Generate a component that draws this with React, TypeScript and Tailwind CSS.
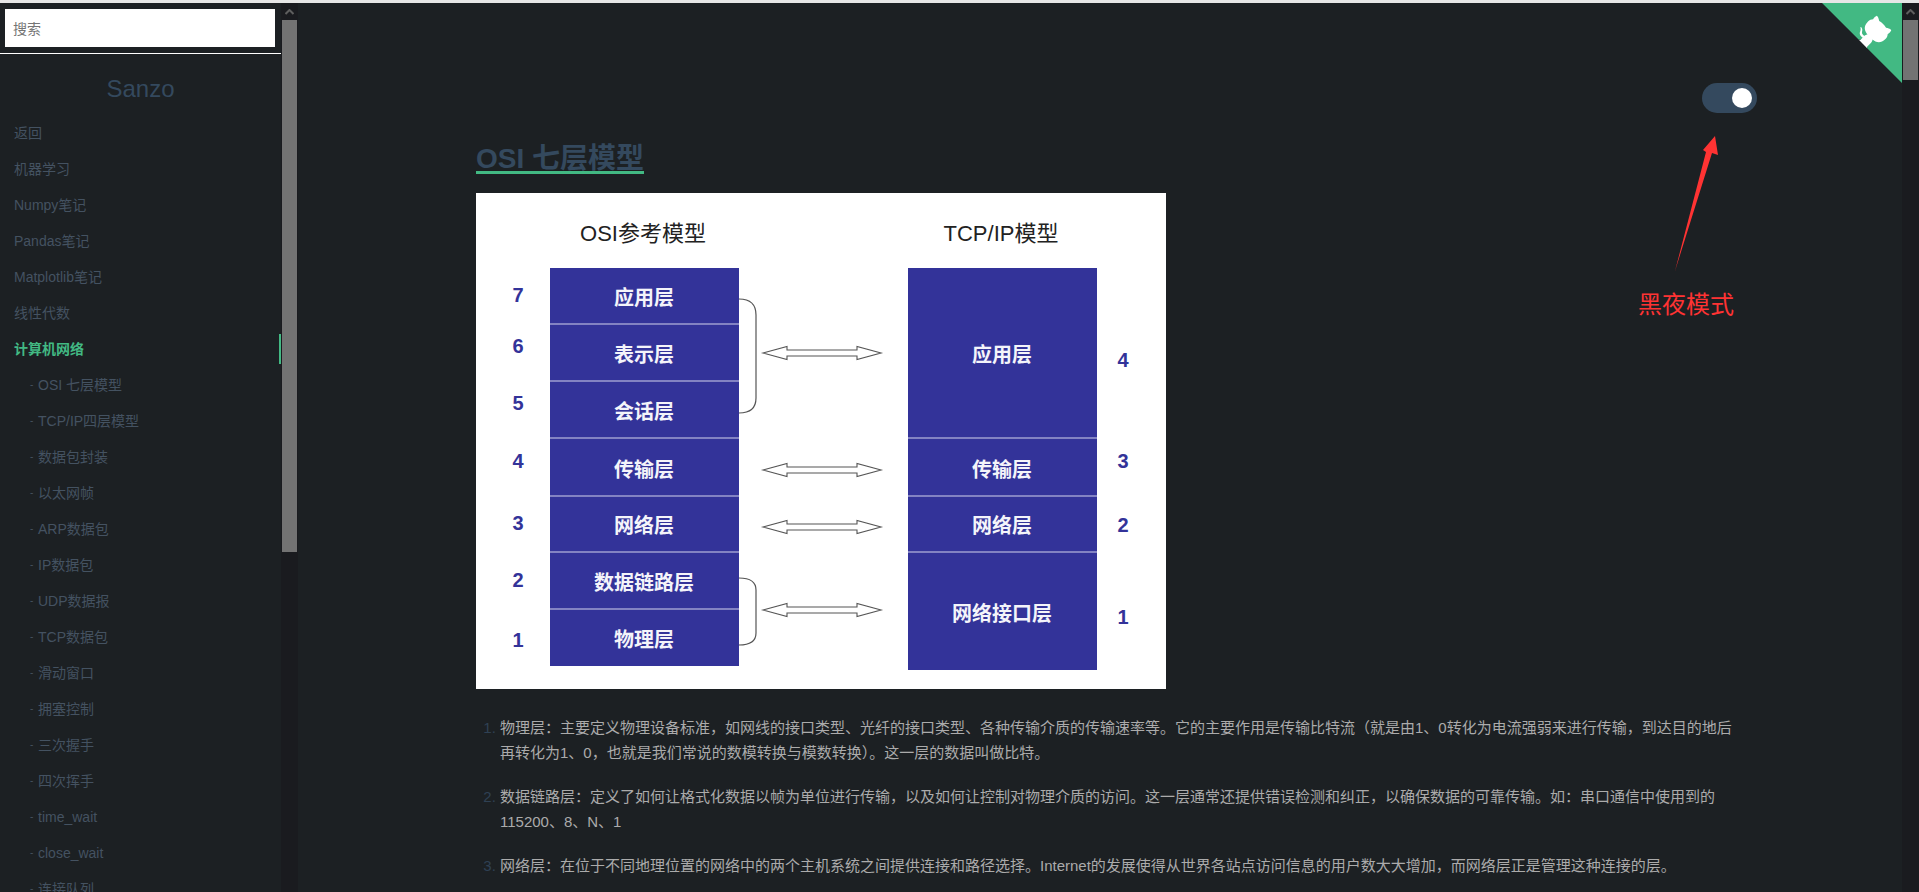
const topNav = ["返回", "机器学习", "Numpy笔记", "Pandas笔记", "Matplotlib笔记", "线性代数"]
const subNav = [
  "OSI 七层模型", "TCP/IP四层模型", "数据包封装", "以太网帧", "ARP数据包", "IP数据包", "UDP数据报", "TCP数据包",
  "滑动窗口", "拥塞控制", "三次握手", "四次挥手", "time_wait", "close_wait", "连接队列",
]

const osiRows = [
  { label: "应用层", y: 105 }, { label: "表示层", y: 162 }, { label: "会话层", y: 219 }, { label: "传输层", y: 277 },
  { label: "网络层", y: 333 }, { label: "数据链路层", y: 390 }, { label: "物理层", y: 447 },
]
const tcpRows = [
  { label: "应用层", y: 162 }, { label: "传输层", y: 277 }, { label: "网络层", y: 333 }, { label: "网络接口层", y: 421 },
]
const osiNums = [
  { n: 7, y: 102 }, { n: 6, y: 153 }, { n: 5, y: 210 }, { n: 4, y: 268 }, { n: 3, y: 330 }, { n: 2, y: 387 }, { n: 1, y: 447 },
]
const tcpNums = [{ n: 4, y: 167 }, { n: 3, y: 268 }, { n: 2, y: 332 }, { n: 1, y: 424 }]
const arrowYs = [160, 277, 334, 417]

function Scrollbar({ thumbHeight }: { thumbHeight: number }) {
  return (
    <div className="w-[17px] shrink-0 bg-[#1a1b1f] flex flex-col items-center">
      <div className="h-[17px] w-full flex items-center justify-center">
        <svg width="9" height="6" viewBox="0 0 9 6"><path d="M0.5 5 L4.5 1 L8.5 5" fill="none" stroke="#5e5e5e" strokeWidth="2" /></svg>
      </div>
      <div className="w-[15px] bg-[#737373]" style={{ height: thumbHeight }} />
    </div>
  )
}

function Sidebar() {
  return (
    <aside className="w-[298px] shrink-0 flex overflow-hidden">
      <div className="w-[281px] shrink-0">
        <div className="px-[5px] pt-[6px] pb-[6px] border-b border-white">
          <input placeholder="搜索" className="w-[270px] h-[38px] bg-white px-[8px] pt-[2px] text-[14px] outline-none placeholder:text-[#757575]" />
        </div>
        <h1 className="mt-[14px] mb-[5px] h-[42px] leading-[42px] text-center text-[24px] text-[#34495e]">Sanzo</h1>
        <ul className="text-[14px] text-[#445261]">
          {topNav.map(item => (
            <li key={item} className="h-9 leading-9 pl-[14px]">{item}</li>
          ))}
          <li className="h-[30px] my-[3px] leading-[30px] pl-[14px] font-bold text-[#42b983] border-r-2 border-[#42b983]">计算机网络</li>
          {subNav.map(item => (
            <li key={item} className="h-9 leading-9 pl-[30px] flex">
              <span className="w-2 text-[10px] text-[#46525e]">-</span>
              <span>{item}</span>
            </li>
          ))}
        </ul>
      </div>
      <Scrollbar thumbHeight={532} />
    </aside>
  )
}

function Diagram() {
  const sans = '"Liberation Sans","Noto Sans CJK SC",sans-serif'
  return (
    <svg width="690" height="496" viewBox="0 0 690 496" className="block bg-white">
      <text x="167" y="48" fontSize="22" fontFamily={sans} textAnchor="middle" fill="#222">OSI参考模型</text>
      <text x="525" y="48" fontSize="22" fontFamily={sans} textAnchor="middle" fill="#222">TCP/IP模型</text>

      <rect x="74" y="75" width="189" height="398" fill="#333399" />
      <rect x="432" y="75" width="189" height="402" fill="#333399" />
      {[131, 188, 245, 303, 359, 416].map(y => (
        <line key={y} x1="74" x2="263" y1={y} y2={y} stroke="#d4d4ec" strokeWidth="1" />
      ))}
      {[245, 303, 359].map(y => (
        <line key={y} x1="432" x2="621" y1={y} y2={y} stroke="#d4d4ec" strokeWidth="1" />
      ))}

      {osiRows.map(r => (
        <text key={r.y} x="168" y={r.y + 7} fontSize="20" fontWeight="700" fontFamily={sans} textAnchor="middle" fill="#f4f4fa">{r.label}</text>
      ))}
      {tcpRows.map(r => (
        <text key={r.y} x="526" y={r.y + 7} fontSize="20" fontWeight="700" fontFamily={sans} textAnchor="middle" fill="#f4f4fa">{r.label}</text>
      ))}
      {osiNums.map(r => (
        <text key={r.y} x="42" y={r.y + 7} fontSize="20" fontWeight="700" fontFamily={sans} textAnchor="middle" fill="#333399">{r.n}</text>
      ))}
      {tcpNums.map(r => (
        <text key={r.y} x="647" y={r.y + 7} fontSize="20" fontWeight="700" fontFamily={sans} textAnchor="middle" fill="#333399">{r.n}</text>
      ))}

      <path d="M263 106 Q280 106 280 122 L280 205 Q280 220 263 220" fill="none" stroke="#555" strokeWidth="1.2" />
      <path d="M263 385 Q280 385 280 397 L280 440 Q280 452 263 452" fill="none" stroke="#555" strokeWidth="1.2" />

      {arrowYs.map(y => (
        <path
          key={y}
          d={`M287 ${y} L311 ${y - 6.5} L311 ${y - 3} L381 ${y - 3} L381 ${y - 6.5} L405 ${y} L381 ${y + 6.5} L381 ${y + 3} L311 ${y + 3} L311 ${y + 6.5} Z`}
          fill="#fff"
          stroke="#555"
          strokeWidth="1.1"
        />
      ))}
    </svg>
  )
}

function GithubCorner() {
  return (
    <svg width="80" height="80" viewBox="0 0 250 250" className="absolute top-[3px] left-[1822px]">
      <path d="M0,0 L115,115 L130,115 L142,142 L250,250 L250,0 Z" fill="#42b983" />
      <path d="M128.3,109.0 C113.8,99.7 119.0,89.6 119.0,89.6 C122.0,82.7 120.5,78.6 120.5,78.6 C119.2,72.0 123.4,76.3 123.4,76.3 C127.3,80.9 125.5,87.3 125.5,87.3 C122.9,97.6 130.6,101.9 134.4,103.2" fill="#fff" />
      <path d="M115.0,115.0 C114.9,115.1 118.7,116.5 119.8,115.4 L133.7,101.6 C136.9,99.2 139.9,98.4 142.2,98.6 C133.8,88.0 127.5,74.4 143.8,58.0 C148.5,53.4 154.0,51.2 159.7,51.0 C160.3,49.4 163.2,43.6 171.4,40.1 C171.4,40.1 176.1,42.5 178.8,56.2 C183.1,58.6 187.2,61.8 190.9,65.4 C194.5,69.0 197.7,73.2 200.1,77.6 C213.8,80.2 216.3,84.9 216.3,84.9 C212.7,93.1 206.9,96.0 205.4,96.6 C205.1,102.4 203.0,107.8 198.3,112.5 C181.9,128.9 168.3,122.5 157.7,114.1 C157.9,116.9 156.7,120.9 152.7,124.9 L141.0,136.5 C139.8,137.7 141.6,141.9 141.8,141.8 Z" fill="#fff" />
    </svg>
  )
}

export default function App() {
  return (
    <div className="relative h-[892px] overflow-hidden bg-[#1c2023] font-['Liberation_Sans','Noto_Sans_CJK_SC',sans-serif]">
      <div className="h-[3px] bg-[#e6e6e6]" />
      <div className="flex h-[889px]">
        <Sidebar />
        <main className="flex-1 overflow-hidden pl-[178px] pr-[165px] pt-[137px]">
          <h1 className="w-fit h-[34px] text-[28px] font-bold leading-[37px] text-[#34495e] border-b-[3px] border-[#42b983]">OSI 七层模型</h1>
          <div className="mt-[19px]"><Diagram /></div>
          <ol className="mt-[26px] pl-6 list-decimal text-[15px] leading-[25px] text-[#ababab] marker:text-[#2f4154]">
            <li className="mb-[19px]">物理层：主要定义物理设备标准，如网线的接口类型、光纤的接口类型、各种传输介质的传输速率等。它的主要作用是传输比特流（就是由1、0转化为电流强弱来进行传输，到达目的地后再转化为1、0，也就是我们常说的数模转换与模数转换）。这一层的数据叫做比特。</li>
            <li className="mb-[19px]">数据链路层：定义了如何让格式化数据以帧为单位进行传输，以及如何让控制对物理介质的访问。这一层通常还提供错误检测和纠正，以确保数据的可靠传输。如：串口通信中使用到的115200、8、N、1</li>
            <li>网络层：在位于不同地理位置的网络中的两个主机系统之间提供连接和路径选择。Internet的发展使得从世界各站点访问信息的用户数大大增加，而网络层正是管理这种连接的层。</li>
          </ol>
        </main>
        <Scrollbar thumbHeight={60} />
      </div>

      <GithubCorner />

      <div className="absolute top-[83px] left-[1702px] w-[55px] h-[30px] rounded-full bg-[#34495e] flex items-center justify-end pr-[5px]">
        <div className="w-5 h-5 rounded-full bg-white" />
      </div>
      <svg width="60" height="150" viewBox="0 0 60 150" className="absolute top-[130px] left-[1665px]">
        <path d="M10 141 L41 22 L38 20 L50 6 L53 25 L47 23 Z" fill="#ff3333" />
      </svg>
      <div className="absolute top-[287px] left-[1638px] text-[24px] leading-[36px] text-[#ff3333]">黑夜模式</div>
    </div>
  )
}
